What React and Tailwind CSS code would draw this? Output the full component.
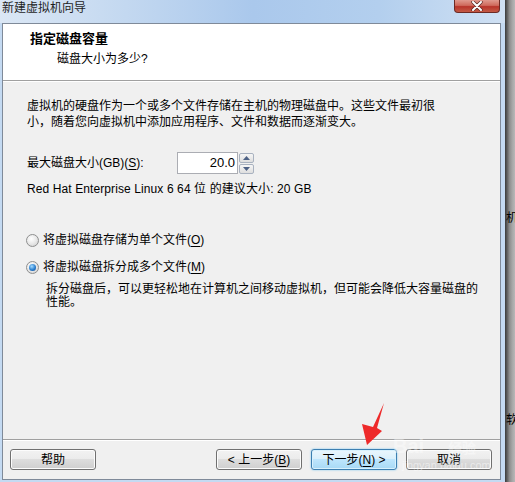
// 新建虚拟机向导 - 指定磁盘容量 (Windows 7 style wizard page)
import React from 'react';

const FONT = "font-['Liberation_Sans','Noto_Sans_CJK_SC',sans-serif]";

const Mn = ({ children }) => <span className="underline underline-offset-2">{children}</span>;

const WinButton = ({ children, primary }) => (
    <div
        className={
            primary
                ? 'w-[86px] h-[21px] rounded-[3px] border border-[#3c7fb1] bg-[linear-gradient(180deg,#eaf6fd_0%,#d9f0fc_50%,#bee6fd_50%,#a7d9f5_100%)] shadow-[inset_0_0_0_1px_#d8f1fd,0_0_2px_#6fc1f0] flex items-center justify-center'
                : 'w-[86px] h-[21px] rounded-[3px] border border-[#707070] bg-[linear-gradient(180deg,#f2f2f2_0%,#ebebeb_50%,#dddddd_50%,#cfcfcf_100%)] shadow-[inset_0_0_0_1px_#fcfcfc] flex items-center justify-center'
        }
    >
        <span className="text-[12px] leading-[14px] whitespace-nowrap">{children}</span>
    </div>
);

const Radio = ({ checked }) => (
    <div className="w-[13px] h-[13px] rounded-full border border-[#8e8f8f] bg-[radial-gradient(circle_at_40%_35%,#ffffff_0%,#e6e6e6_55%,#c8c8c8_100%)] flex items-center justify-center">
        {checked && (
            <div className="w-[7px] h-[7px] rounded-full bg-[radial-gradient(circle_at_40%_35%,#a6dcff_0%,#2a7fcf_55%,#0c3f86_100%)]" />
        )}
    </div>
);

const Spin = ({ up }) => (
    <div className="w-[15px] h-[10px] border border-[#a9b2c0] rounded-[2px] bg-[linear-gradient(180deg,#f6f6f6,#dedede)] flex items-center justify-center">
        <svg width="7" height="4" viewBox="0 0 7 4">
            {up ? <path d="M0 4 L3.5 0 L7 4 Z" fill="#4d6185" /> : <path d="M0 0 L3.5 4 L7 0 Z" fill="#4d6185" />}
        </svg>
    </div>
);

export default function App() {
    return (
        <div className={`w-[515px] h-[482px] flex overflow-hidden relative text-black ${FONT}`}>
            {/* 창 */}
            <div className="w-[505px] h-full flex flex-col bg-[#c4daf2]">
                {/* title bar */}
                <div className="h-[23px] flex items-start bg-[linear-gradient(90deg,#dbe7f5_0%,#c3d8f0_25%,#aac8ec_50%,#b3cfee_75%,#cfe0f3_100%)]">
                    <span className="pl-[2px] text-[12px] leading-[16px] text-[#1e1e1e]">新建虚拟机向导</span>
                    <div className="ml-auto mr-[5px] w-[46px] h-[13px] rounded-b-[4px] border border-t-0 border-[#6d2a24] bg-[linear-gradient(180deg,#e0998e_0%,#cf6a5c_45%,#b8342a_55%,#c45a45_100%)] flex items-center justify-center">
                        <svg width="12" height="10" viewBox="0 0 12 10">
                            <path d="M2 1 L10 9 M10 1 L2 9" stroke="#5a2a26" strokeWidth="3.4" strokeLinecap="round" />
                            <path d="M2 1 L10 9 M10 1 L2 9" stroke="#ffffff" strokeWidth="2" strokeLinecap="round" />
                        </svg>
                    </div>
                </div>

                {/* panel */}
                <div className="ml-[2px] w-[499px] h-[457px] border border-[#7f8a99] bg-[#f0f0f0] flex flex-col">
                    {/* header */}
                    <div className="h-[57px] bg-white border-b border-[#a0a0a0] pt-[7px]">
                        <div className="pl-[27px] text-[13px] leading-[16px] font-bold">指定磁盘容量</div>
                        <div className="pl-[54px] mt-[4px] text-[12px] leading-[16px]">磁盘大小为多少?</div>
                    </div>
                    <div className="h-px bg-white" />

                    {/* body */}
                    <div className="flex-1 flex flex-col px-[24px]">
                        <p className="mt-[16px] text-[12px] leading-[16px] whitespace-nowrap">
                            虚拟机的硬盘作为一个或多个文件存储在主机的物理磁盘中。这些文件最初很
                            <br />
                            小，随着您向虚拟机中添加应用程序、文件和数据而逐渐变大。
                        </p>

                        <div className="mt-[22px] h-[22px] flex items-center">
                            <span className="w-[150px] text-[12px] leading-[16px]">
                                最大磁盘大小(GB)(<Mn>S</Mn>):
                            </span>
                            <div className="w-[61px] h-[22px] border border-[#abadb3] bg-white flex items-center justify-end pr-[2px] text-[13px]">
                                20.0
                            </div>
                            <div className="ml-[1px] flex flex-col gap-[1px]">
                                <Spin up />
                                <Spin />
                            </div>
                        </div>

                        <div className="mt-[7px] text-[12px] leading-[16px] tracking-[0.1px]">
                            Red Hat Enterprise Linux 6 64 位 的建议大小: 20 GB
                        </div>

                        <div className="mt-[35px] h-[16px] flex items-center gap-[4px] -ml-[1px]">
                            <Radio />
                            <span className="text-[12px] leading-[16px]">
                                将虚拟磁盘存储为单个文件(<Mn>O</Mn>)
                            </span>
                        </div>
                        <div className="mt-[11px] h-[16px] flex items-center gap-[4px] -ml-[1px]">
                            <Radio checked />
                            <span className="text-[12px] leading-[16px]">
                                将虚拟磁盘拆分成多个文件(<Mn>M</Mn>)
                            </span>
                        </div>
                        <p className="mt-[8px] pl-[19px] text-[12px] leading-[13px] whitespace-nowrap">
                            拆分磁盘后，可以更轻松地在计算机之间移动虚拟机，但可能会降低大容量磁盘的
                            <br />
                            性能。
                        </p>
                    </div>

                    {/* footer */}
                    <div className="border-t border-[#a0a0a0]" />
                    <div className="h-px bg-white" />
                    <div className="h-[38px] flex items-start pt-[8px] pl-[7px] pr-[8px] gap-[9px]">
                        <WinButton>帮助</WinButton>
                        <div className="ml-auto" />
                        <WinButton>&lt; 上一步(<Mn>B</Mn>)</WinButton>
                        <WinButton primary>下一步(<Mn>N</Mn>) &gt;</WinButton>
                        <WinButton>取消</WinButton>
                    </div>
                </div>
            </div>

            {/* 뒤쪽 창 */}
            <div className="w-[10px] h-full bg-[linear-gradient(90deg,#3a3a3a_0%,#5e5e5e_20%,#8e8e8e_45%,#a8a8a8_75%,#b8b8b8_100%)] flex flex-col overflow-hidden">
                <span className="mt-[210px] pl-[1px] text-[12px] leading-[16px] whitespace-nowrap">机</span>
                <span className="mt-[186px] pl-[1px] text-[12px] leading-[16px] whitespace-nowrap">软</span>
            </div>

            {/* 빨간 화살표 */}
            <svg className="absolute left-0 top-0 pointer-events-none" width="515" height="482">
                <path d="M384 403 L377 428 L382 431 L367 445 L362 424 L373 427 Z" fill="#ee2a2a" />
            </svg>

            {/* 워터마크 */}
            <div className="absolute left-[393px] top-[436px] text-[20px] leading-[20px] font-bold text-white/40 pointer-events-none">
                Bai<span className="ml-[24px] text-[14px]">经验</span>
            </div>
            <div className="absolute left-[402px] top-[459px] text-[11px] leading-[12px] text-white/50 pointer-events-none">
                jingyan.baidu.com
            </div>
        </div>
    );
}
